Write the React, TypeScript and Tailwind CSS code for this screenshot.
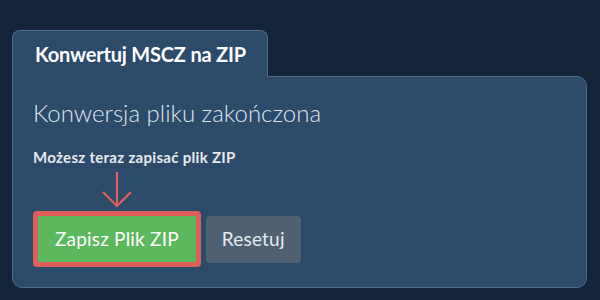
import React from 'react';

export default function App() {
  return (
    <div
      className="w-[600px] h-[300px] bg-[#12233a] pt-[30px] px-[12px] overflow-hidden"
      style={{ fontFamily: 'Lato, "Noto Sans", sans-serif' }}
    >
      <div className="flex flex-col w-[575px]">
        {/* tab */}
        <div className="relative z-10 -mb-px w-[256px] h-[47px] bg-[#2c4a6a] border border-b-0 border-[#4d6b8b] rounded-t-[8px] flex items-center pl-[22px]">
          <span className="text-[20px] font-bold text-white tracking-[-0.2px]">Konwertuj MSCZ na ZIP</span>
        </div>

        {/* panel */}
        <div className="bg-[#2c4a6a] border border-[#4d6b8b] rounded-b-[10px] rounded-tr-[10px] pl-[20px] pt-[20px] pb-[20px]">
          <h2 className="text-[24px] leading-[32px] font-light text-[#dfe5ec]">Konwersja pliku zakończona</h2>
          <p className="mt-[18px] text-[15px] leading-[20px] font-bold tracking-[0.3px] text-[#e6ebf0]">Możesz teraz zapisać plik ZIP</p>

          <div className="flex items-end gap-[5px]">
            <div className="flex flex-col items-center">
              <svg width="32" height="38" viewBox="0 0 32 38" className="mt-[4px] mb-[2px]">
                <line x1="16" y1="1" x2="16" y2="35" stroke="#e0605a" strokeWidth="2.2" />
                <polyline points="2,21 16,35 30,21" fill="none" stroke="#e0605a" strokeWidth="2.2" />
              </svg>
              <button className="h-[56px] px-[17px] bg-[#5cb85c] border-[5px] border-[#df5f5a] rounded-[4px] text-[19px] tracking-[0.2px] text-white">
                Zapisz Plik ZIP
              </button>
            </div>
            <button className="h-[47px] mb-[4px] px-[16px] bg-[#4f6073] rounded-[4px] text-[19px] tracking-[0.2px] text-[#e6ebf0]">
              Resetuj
            </button>
          </div>
        </div>
      </div>
    </div>
  );
}
